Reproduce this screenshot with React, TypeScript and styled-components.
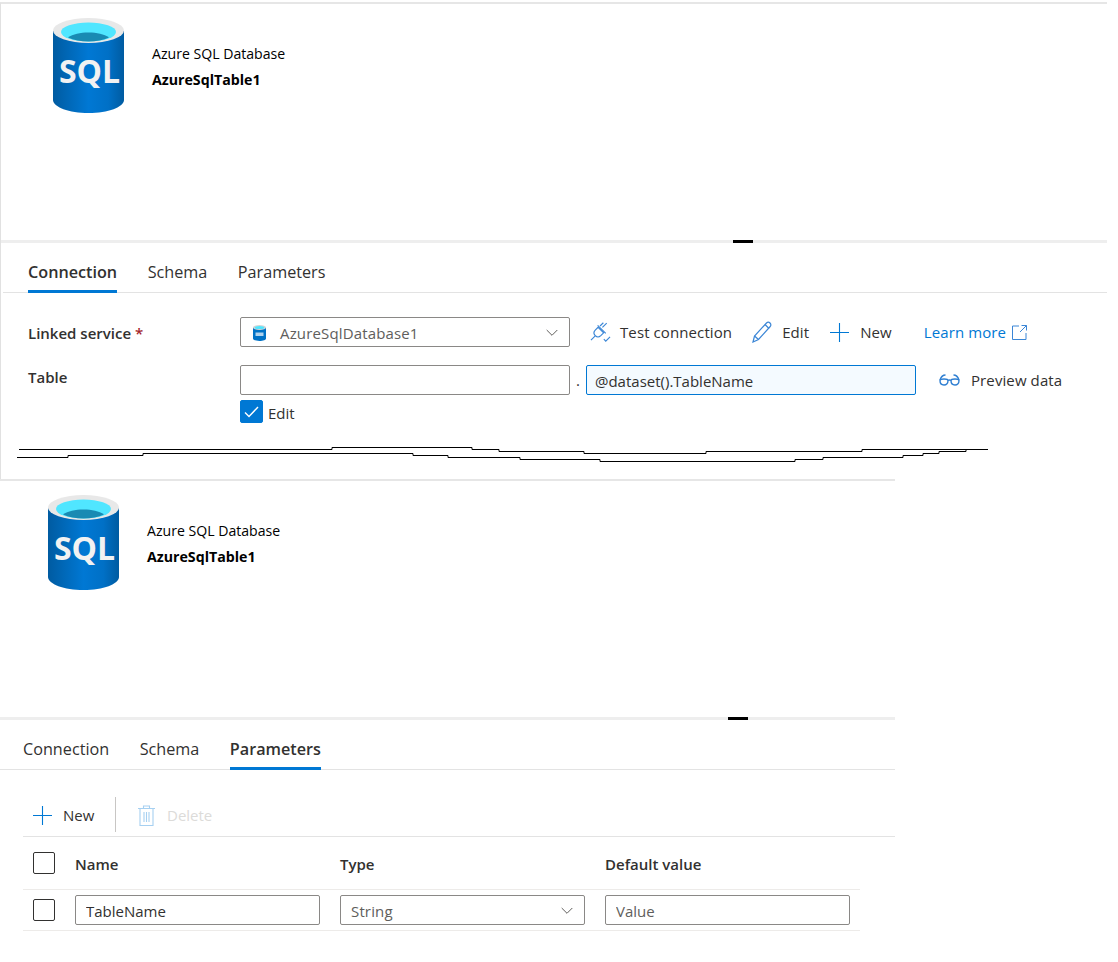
import React from "react";
import styled, { createGlobalStyle } from "styled-components";

const Global = createGlobalStyle`
  html, body { margin: 0; padding: 0; background: #fff; }
  body { font-family: "Open Sans", "Noto Sans", "Liberation Sans", sans-serif; font-size: 15px; color: #323130; }
  input { font-family: inherit; }
`;

const Page = styled.div`
  width: 1118px;
  height: 962px;
  padding-top: 2px;
  box-sizing: border-box;
  overflow: hidden;
`;

const Panel = styled.section<{ $width: number; $inset: number; $leftRule?: boolean }>`
  display: flow-root;
  width: ${(p) => p.$width}px;
  box-sizing: border-box;
  border-top: 2px solid #e6e6e6;
  border-left: ${(p) => (p.$leftRule ? "1px solid #e1e1e1" : "none")};
  --inset: ${(p) => p.$inset - (p.$leftRule ? 1 : 0)}px;
  --rule-gap: ${(p) => (p.$leftRule ? 2 : 0)}px;
`;

const Header = styled.header`
  height: 236px;
  display: flex;
  align-items: flex-start;
  padding: 14px 0 0 calc(var(--inset) + 25px);
  box-sizing: border-box;
`;

const HeaderText = styled.div`
  margin: 26px 0 0 28px;
  display: flex;
  flex-direction: column;
  gap: 7px;
  color: #000;
`;

const Kind = styled.div`
  font-size: 14.1px;
  line-height: 19px;
`;

const Title = styled.div`
  font-size: 14.2px;
  line-height: 19px;
  font-weight: 700;
`;

const Splitter = styled.div<{ $handle: number }>`
  height: 3px;
  background: #eeeeee;
  position: relative;
  &::after {
    content: "";
    position: absolute;
    left: ${(p) => p.$handle}px;
    top: 0;
    width: 20px;
    height: 3px;
    background: #000;
  }
`;

const Tabs = styled.nav`
  height: 50px;
  box-sizing: border-box;
  margin-left: var(--rule-gap);
  padding-left: calc(var(--inset) - var(--rule-gap));
  display: flex;
  gap: 30.5px;
  border-bottom: 1.5px solid #e3e3e3;
`;

const Tab = styled.div<{ $active?: boolean }>`
  height: 50px;
  box-sizing: border-box;
  padding-top: 19px;
  font-size: 16.2px;
  line-height: 20px;
  font-weight: ${(p) => (p.$active ? 600 : 400)};
  border-bottom: ${(p) => (p.$active ? "3px solid #0078d4" : "none")};
  color: #323130;
`;

const Form = styled.div`
  padding: 24px 0 0 var(--inset);
  display: flex;
  flex-direction: column;
`;

const FormRow = styled.div<{ $gap?: number }>`
  display: flex;
  align-items: center;
  height: 30px;
  margin-bottom: ${(p) => p.$gap ?? 0}px;
`;

const FieldLabel = styled.label`
  width: 212px;
  padding-top: 1px;
  font-weight: 600;
  font-size: 15px;
  span { color: #a4262c; }
`;

const TableLabel = styled(FieldLabel)`
  margin-top: -7px;
`;

const Select = styled.div<{ $width: number }>`
  width: ${(p) => p.$width}px;
  height: 30px;
  box-sizing: border-box;
  border: 1px solid #8a8886;
  border-radius: 2px;
  display: flex;
  align-items: center;
  padding: 1px 11px 0 10px;
  color: #605e5c;
  font-size: 15px;
  letter-spacing: 0.15px;
`;

const SelectValue = styled.span`
  flex: 1;
`;

const LinkedIcon = styled.span`
  display: inline-flex;
  width: 27px;
  margin-left: 2px;
`;

const Input = styled.input<{ $width: number; $focused?: boolean }>`
  width: ${(p) => p.$width}px;
  height: 30px;
  box-sizing: border-box;
  border: 1px solid ${(p) => (p.$focused ? "#0078d4" : "#8a8886")};
  background: ${(p) => (p.$focused ? "#f4faff" : "#fff")};
  border-radius: 2px;
  padding: 1px ${(p) => (p.$focused ? 8 : 10)}px 0;
  font-size: 15px;
  color: #323130;
  outline: none;
  &::placeholder { color: #605e5c; opacity: 1; }
`;

const Dot = styled.span`
  width: 16px;
  text-align: center;
  color: #323130;
`;

const Action = styled.div<{ $offset: number; $gap: number }>`
  display: flex;
  align-items: center;
  gap: ${(p) => p.$gap}px;
  margin-left: ${(p) => p.$offset}px;
  font-size: 15px;
  letter-spacing: 0.1px;
  white-space: nowrap;
`;

const LearnMore = styled.a`
  display: flex;
  align-items: center;
  gap: 6px;
  margin-left: 32px;
  color: #0078d4;
  font-size: 15px;
  letter-spacing: 0.1px;
  white-space: nowrap;
`;

const CheckRow = styled.div`
  margin-top: 5px;
  margin-left: 212px;
  height: 23px;
  display: flex;
  align-items: center;
  gap: 5px;
  font-size: 15px;
  line-height: 20px;
`;

const CheckText = styled.span`
  padding-top: 3px;
`;

const Checkbox = styled.div<{ $checked?: boolean; $size: number }>`
  width: ${(p) => p.$size}px;
  height: ${(p) => p.$size}px;
  box-sizing: border-box;
  border-radius: 2px;
  border: 1px solid ${(p) => (p.$checked ? "#0078d4" : "#323130")};
  background: ${(p) => (p.$checked ? "#0078d4" : "#fff")};
  display: flex;
  align-items: center;
  justify-content: center;
  flex: none;
`;

const Torn = styled.svg`
  display: block;
  margin: 23px 0 17px 16px;
`;

const Toolbar = styled.div`
  margin: 27px 0 0 var(--inset);
  height: 39px;
  border-bottom: 1.5px solid #e3e3e3;
  display: flex;
  align-items: flex-start;
  box-sizing: content-box;
`;

const ToolButton = styled.div<{ $disabled?: boolean }>`
  display: flex;
  align-items: center;
  gap: 11px;
  height: 36px;
  font-size: 15px;
  color: ${(p) => (p.$disabled ? "#dcdbd9" : "#323130")};
`;

const NewButton = styled(ToolButton)`
  padding-left: 10px;
  width: 92px;
  box-sizing: border-box;
`;

const DeleteButton = styled(ToolButton)`
  padding-left: 22px;
  gap: 12px;
`;

const ToolDivider = styled.div`
  width: 1px;
  height: 35px;
  background: #c8c6c4;
`;

const Table = styled.div`
  margin-left: var(--inset);
  width: 837px;
`;

const GridRow = styled.div<{ $height: number }>`
  display: grid;
  grid-template-columns: 52px 265px 265px 255px;
  height: ${(p) => p.$height}px;
  box-sizing: border-box;
  align-items: center;
  border-bottom: 1.5px solid #edebe9;
`;

const CheckCell = styled.div`
  padding-left: 10px;
`;

const HeadCell = styled.div`
  padding-top: 2px;
  font-weight: 600;
  font-size: 15px;
`;

const SqlSymbol = () => (
  <svg width="71" height="95" viewBox="0 0 71 95" style={{ flex: "none" }}>
    <defs>
      <linearGradient id="sqlBody" x1="0" x2="1" y1="0" y2="0">
        <stop offset="0" stopColor="#005ba1" />
        <stop offset="0.5" stopColor="#0078d4" />
        <stop offset="0.78" stopColor="#0070c6" />
        <stop offset="1" stopColor="#005ba1" />
      </linearGradient>
    </defs>
    <path d="M0 13V82C0 89 16 95 35.5 95S71 89 71 82V13Z" fill="url(#sqlBody)" />
    <ellipse cx="35.5" cy="12.5" rx="35.5" ry="12.5" fill="#e8e8e8" />
    <ellipse cx="35.5" cy="14" rx="27.5" ry="9.5" fill="#50e6ff" />
    <path d="M15 19.5C20 16 27 14.5 35.5 14.5S51 16 56 19.5C50.5 22 43 23.5 35.5 23.5S20.5 22 15 19.5Z" fill="#198ab3" />
    <text x="36.5" y="65" textAnchor="middle" fontFamily="'Open Sans', sans-serif" fontWeight="700" fontSize="32" fill="#f2f2f2">SQL</text>
  </svg>
);

const MiniSql = () => (
  <svg width="13" height="16" viewBox="0 0 13 16">
    <path d="M0 2.5V13.5C0 15 3 16 6.5 16S13 15 13 13.5V2.5Z" fill="#0072c6" />
    <ellipse cx="6.5" cy="2.5" rx="6.5" ry="2.5" fill="#d5d5d5" />
    <ellipse cx="6.5" cy="2.5" rx="4.8" ry="1.6" fill="#50e6ff" />
    <rect x="2.5" y="7.5" width="8" height="3.5" fill="#cfe4f5" opacity="0.85" />
  </svg>
);

const Chevron = () => (
  <svg width="12" height="8" viewBox="0 0 12 8" fill="none" stroke="#605e5c" strokeWidth="1">
    <path d="M.7 1 6 6.3 11.3 1" />
  </svg>
);

const PlugIcon = () => (
  <svg width="21" height="21" viewBox="0 0 22 22" fill="none" stroke="#3b86d6" strokeWidth="1.2">
    <path d="M8.5 5.5 5.5 8.5c-1.7 1.8-1.6 4.2 0 5.8s4 1.7 5.8 0l3-3Z" />
    <path d="M1 19 5.5 14.5M8 3.5 16.5 12M17.5 1.2 13 5.7M14 0.8 10.5 4.2" />
    <path d="M14.5 18 16.5 20 21 15.5" />
  </svg>
);

const PencilIcon = () => (
  <svg width="20" height="22" viewBox="0 0 20 22" fill="none" stroke="#3b86d6" strokeWidth="1.2">
    <path d="M1 21 2.5 15 14.5 2C15.5 1 17 1 18 2S19.2 4.5 18.2 5.5L6.5 18.5Z" />
    <path d="M2.5 15 6.5 18.5M13 3.5 17 7.5" />
  </svg>
);

const PlusIcon = () => (
  <svg width="19" height="19" viewBox="0 0 19 19" stroke="#0078d4" strokeWidth="1.1">
    <path d="M9.5 0V19M0 9.5H19" />
  </svg>
);

const ExternalIcon = () => (
  <svg width="15" height="15" viewBox="0 0 15 15" fill="none" stroke="#3b86d6" strokeWidth="1">
    <path d="M7 1H.5V14.5H14V8M9.5.5H14.5V5.5M14.5.5 8 7" />
  </svg>
);

const GlassesIcon = () => (
  <svg width="21" height="12" viewBox="0 0 21 12" fill="none" stroke="#2f7fd2" strokeWidth="1.4">
    <path d="M1 6.5C1 5.5 3 5 5 5S9 5.5 9 6.5C9 9 7.5 11 5 11S1 9 1 6.5Z" />
    <path d="M12 6.5C12 5.5 14 5 16 5S20 5.5 20 6.5C20 9 18.5 11 16 11S12 9 12 6.5Z" />
    <path d="M9 6.5C10 5.8 11 5.8 12 6.5M1 6C2 3 3.5 1 6.5 1M20 6C19 3 17.5 1 14.5 1" />
  </svg>
);

const TrashIcon = () => (
  <svg width="17" height="21" viewBox="0 0 17 21" fill="none" stroke="#a6d0f1" strokeWidth="1.1">
    <path d="M0 3.5H17M5.5 3.5V1H11.5V3.5M2 3.5V20.5H15V3.5M6 7V17M8.5 7V17M11 7V17" />
  </svg>
);

const CheckMark = () => (
  <svg width="15" height="12" viewBox="0 0 15 12" fill="none" stroke="#fff" strokeWidth="1.4">
    <path d="M1 6.5 5 10.5 14 1" />
  </svg>
);

const TornLines = () => (
  <Torn width="972" height="16" viewBox="17 446 972 16" fill="none" stroke="#000" strokeWidth="1">
    <path d="M19 449.5H332V447.5H472V449.5H499V451.5H584V453.5H706V451.5H862V449.5H988" />
    <path d="M17 457.5H68V455.5H143V453.5H413V455.5H448V457.5H520V459.5H600V461.5H795V459.5H823V457.5H903V455.5H923V453.5H939V451.5H966V449.5" />
  </Torn>
);

const DatasetHeader = () => (
  <Header>
    <SqlSymbol />
    <HeaderText>
      <Kind>Azure SQL Database</Kind>
      <Title>AzureSqlTable1</Title>
    </HeaderText>
  </Header>
);

const TabBar = ({ active }: { active: string }) => (
  <Tabs>
    {["Connection", "Schema", "Parameters"].map((t) => (
      <Tab key={t} $active={t === active}>{t}</Tab>
    ))}
  </Tabs>
);

export default function App() {
  return (
    <Page>
      <Global />
      <Panel $width={1107} $inset={28} $leftRule>
        <DatasetHeader />
        <Splitter $handle={732} />
        <TabBar active="Connection" />
        <Form>
          <FormRow $gap={18}>
            <FieldLabel>Linked service <span>*</span></FieldLabel>
            <Select $width={330}>
              <LinkedIcon><MiniSql /></LinkedIcon>
              <SelectValue>AzureSqlDatabase1</SelectValue>
              <Chevron />
            </Select>
            <Action $offset={20} $gap={9}><PlugIcon />Test connection</Action>
            <Action $offset={20} $gap={10}><PencilIcon />Edit</Action>
            <Action $offset={21} $gap={11}><PlusIcon />New</Action>
            <LearnMore>Learn more <ExternalIcon /></LearnMore>
          </FormRow>
          <FormRow>
            <TableLabel>Table</TableLabel>
            <Input $width={330} readOnly />
            <Dot>.</Dot>
            <Input $width={330} $focused readOnly value="@dataset().TableName" />
            <Action $offset={23} $gap={11}><GlassesIcon />Preview data</Action>
          </FormRow>
          <CheckRow>
            <Checkbox $checked $size={23}><CheckMark /></Checkbox>
            <CheckText>Edit</CheckText>
          </CheckRow>
        </Form>
        <TornLines />
      </Panel>
      <Panel $width={895} $inset={23}>
        <DatasetHeader />
        <Splitter $handle={728} />
        <TabBar active="Parameters" />
        <Toolbar>
          <NewButton><PlusIcon />New</NewButton>
          <ToolDivider />
          <DeleteButton $disabled><TrashIcon />Delete</DeleteButton>
        </Toolbar>
        <Table>
          <GridRow $height={53}>
            <CheckCell><Checkbox $size={22} /></CheckCell>
            <HeadCell>Name</HeadCell>
            <HeadCell>Type</HeadCell>
            <HeadCell>Default value</HeadCell>
          </GridRow>
          <GridRow $height={41}>
            <CheckCell><Checkbox $size={22} /></CheckCell>
            <Input $width={245} readOnly value="TableName" />
            <Select $width={245}>
              <SelectValue>String</SelectValue>
              <Chevron />
            </Select>
            <Input $width={245} readOnly placeholder="Value" />
          </GridRow>
        </Table>
      </Panel>
    </Page>
  );
}
